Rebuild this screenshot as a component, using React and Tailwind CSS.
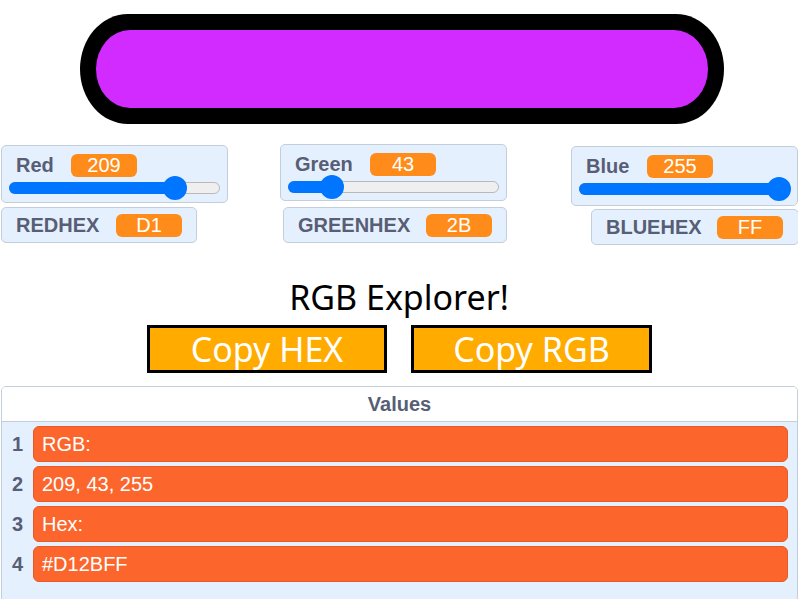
import React from 'react';

const monitorFont = { fontFamily: '"Liberation Sans", Arial, sans-serif' };
const spriteFont = { fontFamily: '"Noto Sans", "Open Sans", sans-serif' };

const Slider = ({ value, max = 255 }) => {
  const pct = (value / max) * 100;
  return (
    <div className="relative h-[24px] w-full">
      <div className="absolute inset-x-0 top-[6px] h-[12px] rounded-full border border-[#b9b9b9] bg-[#efefef]" />
      <div
        className="absolute left-0 top-[6px] h-[12px] rounded-full bg-[#0075ff]"
        style={{ width: `calc(${pct}% * 0.9 + 12px)` }}
      />
      <div
        className="absolute top-0 h-[24px] w-[24px] rounded-full bg-[#0075ff]"
        style={{ left: `calc(${pct}% * 0.89)` }}
      />
    </div>
  );
};

const ValuePill = ({ children }) => (
  <span className="flex h-[23px] w-[66px] items-center justify-center rounded-[6px] bg-[#ff8c1a] text-[20px] leading-none text-white">
    {children}
  </span>
);

const SliderMonitor = ({ label, value, className, labelWidth }) => (
  <div
    className={`w-[227px] rounded-[5px] border border-[#c4cedb] bg-[#e5f0ff] px-[7px] pt-[4px] ${className}`}
    style={monitorFont}
  >
    <div className="flex items-center">
      <span className="pl-[7px] text-[20px] font-bold text-[#575e75]" style={{ width: labelWidth }}>
        {label}
      </span>
      <ValuePill>{value}</ValuePill>
    </div>
    <div className="-mt-[4px]">
      <Slider value={value} />
    </div>
  </div>
);

const HexMonitor = ({ label, value, className, labelWidth }) => (
  <div
    className={`flex h-[36px] items-center rounded-[5px] border border-[#c4cedb] bg-[#e5f0ff] pl-[14px] ${className}`}
    style={monitorFont}
  >
    <span className="text-[20px] font-bold text-[#575e75]" style={{ width: labelWidth }}>
      {label}
    </span>
    <ValuePill>{value}</ValuePill>
  </div>
);

const rows = ['RGB:', '209, 43, 255', 'Hex:', '#D12BFF'];

export default function App() {
  return (
    <div className="flex h-[599px] w-[798px] flex-col overflow-hidden bg-white">
      {/* colour swatch sprite */}
      <div className="ml-[80px] mt-[14px] h-[110px] w-[644px] shrink-0 rounded-[48px/55px] bg-black p-[16px]">
        <div className="h-full w-full rounded-[34px/39px] bg-[#d12bff]" />
      </div>

      {/* variable monitors */}
      <div className="mt-[20px] flex shrink-0 items-start">
        <div className="ml-[1px] mt-[1px] flex flex-col items-start gap-[4px]">
          <SliderMonitor label="Red" value={209} labelWidth={62} className="h-[58px]" />
          <HexMonitor label="REDHEX" value="D1" labelWidth={100} className="w-[196px]" />
        </div>
        <div className="ml-[52px] flex flex-col items-start gap-[6px]">
          <SliderMonitor label="Green" value={43} labelWidth={82} className="h-[57px]" />
          <HexMonitor label="GREENHEX" value="2B" labelWidth={128} className="ml-[3px] w-[224px]" />
        </div>
        <div className="ml-[64px] mt-[2px] flex flex-col items-start gap-[3px]">
          <SliderMonitor label="Blue" value={255} labelWidth={68} className="h-[60px]" />
          <HexMonitor label="BLUEHEX" value="FF" labelWidth={111} className="ml-[20px] w-[208px]" />
        </div>
      </div>

      <div className="mt-[31px] shrink-0 text-center text-[34px] leading-[42px] text-black" style={spriteFont}>
        RGB Explorer!
      </div>

      <div className="ml-[147px] mt-[7px] flex shrink-0 gap-[24px]" style={spriteFont}>
        <button className="flex h-[48px] w-[240px] items-center justify-center border-[3px] border-black bg-[#ffab00] text-[34px] leading-none text-white">
          Copy HEX
        </button>
        <button className="flex h-[48px] w-[241px] items-center justify-center border-[3px] border-black bg-[#ffab00] text-[34px] leading-none text-white">
          Copy RGB
        </button>
      </div>

      {/* list monitor */}
      <div
        className="ml-[1px] mt-[13px] h-[230px] w-[797px] shrink-0 overflow-hidden rounded-[5px] border border-[#c4cedb] bg-[#e5f0ff]"
        style={monitorFont}
      >
        <div className="flex h-[35px] items-center justify-center border-b border-[#c4cedb] bg-white text-[20px] font-bold text-[#575e75]">
          Values
        </div>
        <div className="flex flex-col gap-[4px] pr-[9px] pt-[4px]">
          {rows.map((text, i) => (
            <div key={i} className="flex items-center">
              <span className="w-[31px] text-center text-[20px] font-bold text-[#575e75]">{i + 1}</span>
              <div className="flex h-[36px] flex-1 items-center rounded-[6px] border border-[#e55a26] bg-[#fc662c] px-[8px] text-[20px] text-white">
                {text}
              </div>
            </div>
          ))}
        </div>
      </div>
    </div>
  );
}
